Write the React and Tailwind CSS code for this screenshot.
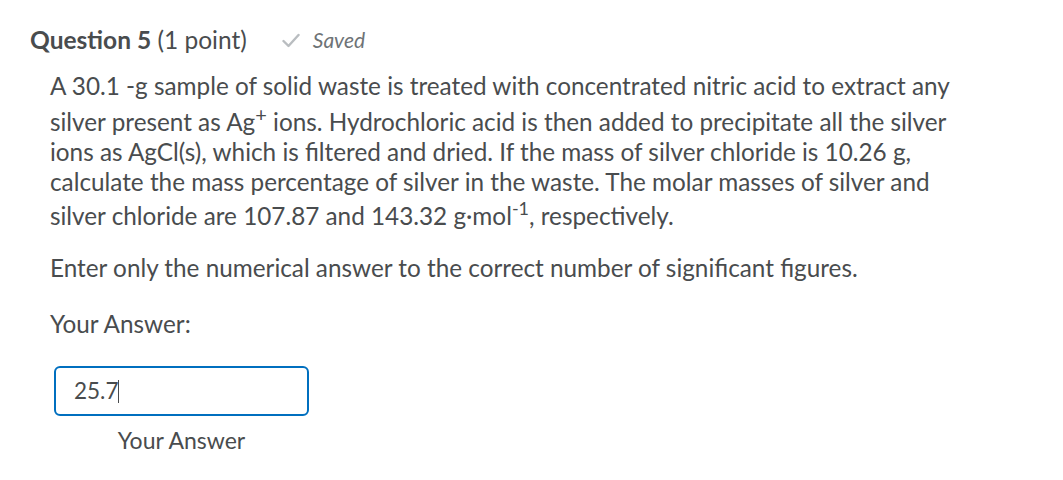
import React from 'react';

export default function App() {
  return (
    <div className="min-h-[480px] w-[1063px] bg-white text-[#494c4e]" style={{ fontFamily: 'Lato, "Liberation Sans", sans-serif' }}>
      <div className="pt-[24px] pl-[30px]">
        <div className="flex items-center h-[32px]">
          <h2 className="text-[24.5px] leading-[32px]">
            <span className="font-bold">Question 5</span> (1 point)
          </h2>
          <div className="ml-[35px] flex items-center gap-[13px] text-[#6e7376]">
            <svg width="18" height="15" viewBox="0 0 18 15" fill="none">
              <path d="M1.5 8 L6.5 13 L16.5 2" stroke="#b9bdc0" strokeWidth="2.4" strokeLinecap="round" strokeLinejoin="round" />
            </svg>
            <span className="italic text-[21px]">Saved</span>
          </div>
        </div>

        <div className="pl-[20px] mt-[15px] text-[24.3px] leading-[30px] w-[930px]">
          <p>
            A 30.1 -g sample of solid waste is treated with concentrated nitric acid to extract any silver present as Ag<sup className="static align-[9px] leading-[27px] text-[20px]">+</sup> ions. Hydrochloric acid is then added to precipitate all the silver ions as AgCl(s), which is filtered and dried. If the mass of silver chloride is 10.26 g, calculate the mass percentage of silver in the waste. The molar masses of silver and silver chloride are 107.87 and 143.32 g·mol<sup className="static align-[10px] leading-[23px] text-[18px]">-1</sup>, respectively.
          </p>
          <p className="mt-[22px]">Enter only the numerical answer to the correct number of significant figures.</p>
          <p className="mt-[26px]">Your Answer:</p>

          <div className="mt-[27px] ml-[4px] w-[255px] flex flex-col items-center">
            <div className="w-full h-[50px] rounded-[6px] border-2 border-[#006fbf] flex items-center pl-[18px] text-[22.5px]">
              <span>25.7</span>
              <span className="inline-block w-px h-[23px] bg-[#494c4e]" />
            </div>
            <div className="mt-[10px] text-[23px] leading-[28px]">Your Answer</div>
          </div>
        </div>
      </div>
    </div>
  );
}
